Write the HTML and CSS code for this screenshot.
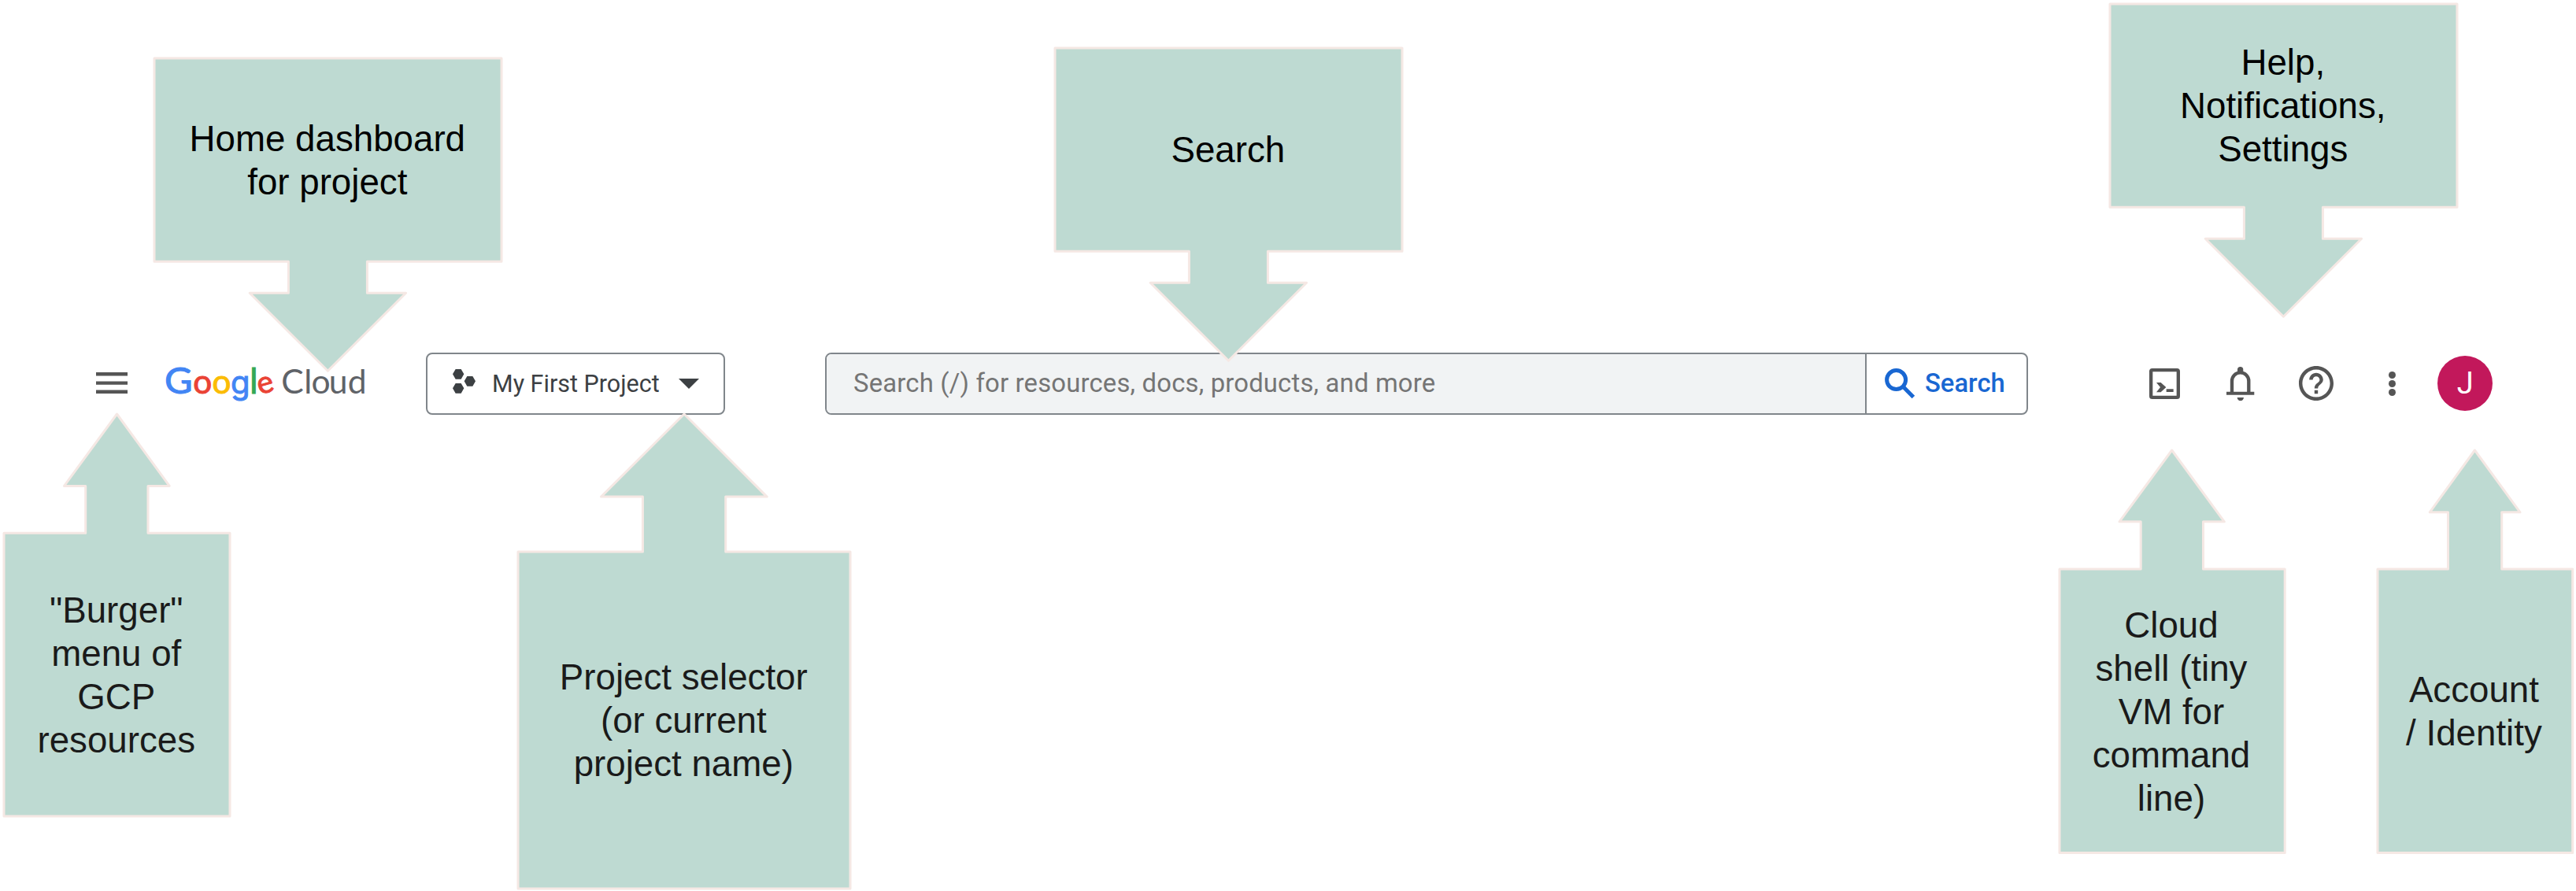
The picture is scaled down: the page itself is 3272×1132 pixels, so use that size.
FILE: index.html
```html
<!DOCTYPE html>
<html lang="en">
<head>
<meta charset="utf-8">
<title>Google Cloud console toolbar</title>
<link rel="stylesheet" href="styles.css">
</head>
<body>
<header class="toolbar">
  <svg class="menu" viewBox="0 0 40 28"><path d="M0 2.3h40M0 13.6h40M0 24.8h40"/></svg>

  <svg class="logo" viewBox="0 0 260 60">
    <g class="logo-google">
      <text class="blue big" x="-1" y="43" textLength="35.6" lengthAdjust="spacingAndGlyphs">G</text>
      <text class="red" x="35.3" y="42.7">o</text>
      <text class="yellow" x="59.6" y="42.7">o</text>
      <text class="blue round" x="83" y="42.7">g</text>
      <text class="green tall" x="107.3" y="42.5">l</text>
      <text class="red small" transform="translate(120.1 44.6) rotate(-16)">e</text>
    </g>
    <g class="logo-cloud">
      <text x="147.3" y="43">C</text>
      <text x="176.2" y="43">l</text>
      <text x="185.6" y="43">o</text>
      <text x="207.8" y="43">u</text>
      <text x="231.8" y="43">d</text>
    </g>
  </svg>

  <button class="project">
    <svg class="project-icon" viewBox="0 0 87 93"><path d="M11 0h21l11 19-11 19H11L0 19zM55 27h21l11 19-11 19H55L44 46zM11 54h21l11 19-11 19H11L0 73z"/></svg>
    <span class="project-name">My First Project</span>
    <svg class="caret" viewBox="0 0 26 13"><path d="M0 0h26L13 13z"/></svg>
  </button>

  <div class="search">
    <div class="search-field">Search (/) for resources, docs, products, and more</div>
    <button class="search-button">
      <svg class="search-icon" viewBox="0 0 39 39"><circle cx="14.6" cy="14.6" r="12"/><path d="M22.8 22.8 36.4 36.4"/></svg>
      <span>Search</span>
    </button>
  </div>

  <nav class="tools">
    <svg class="tool shell" viewBox="0 0 117 117"><rect x="6.5" y="6.5" width="104" height="104" rx="5"/><path d="M27 54h17l20 18-20 19H27l15-19zM65 79h27v11H65z"/></svg>
    <svg class="tool bell" viewBox="0 0 106 129"><path class="line" d="M21 98V54a32 32 0 0 1 64 0v44"/><path d="M0 95h106v12H0zM42 20V11a11 11 0 0 1 22 0v9zM41 117h25a12.5 12.5 0 0 1-25 0z"/></svg>
    <svg class="tool help" viewBox="2 2 20 20"><path d="M11 18h2v-2h-2v2zm1-16C6.48 2 2 6.48 2 12s4.48 10 10 10 10-4.48 10-10S17.52 2 12 2zm0 18c-4.41 0-8-3.59-8-8s3.59-8 8-8 8 3.59 8 8-3.59 8-8 8zm0-14c-2.21 0-4 1.79-4 4h2c0-1.1.9-2 2-2s2 .9 2 2c0 2-3 1.75-3 5h2c0-2.25 3-2.5 3-5 0-2.21-1.79-4-4-4z"/></svg>
    <svg class="tool more" viewBox="0 0 9 31"><circle cx="4.5" cy="4.5" r="4.5"/><circle cx="4.5" cy="15.5" r="4.5"/><circle cx="4.5" cy="26.5" r="4.5"/></svg>
    <span class="avatar">J</span>
  </nav>
</header>

<section class="callout down home">
  <svg class="shape"><path d="M0 0H441V258.3H270.4V298.3H319.6L220.4 397.2 121.2 298.3H170.4V258.3H0z"/></svg>
  <p class="label">Home dashboard<br>for project</p>
</section>
<section class="callout down find">
  <svg class="shape"><path d="M0 0H441V258.3H270.4V298.3H319.6L220.4 397.2 121.2 298.3H170.4V258.3H0z"/></svg>
  <p class="label">Search</p>
</section>
<section class="callout down support">
  <svg class="shape"><path d="M0 0H441V258.3H270.4V298.3H319.6L220.4 397.2 121.2 298.3H170.4V258.3H0z"/></svg>
  <p class="label">Help,<br>Notifications,<br>Settings</p>
</section>
<section class="callout up burger">
  <svg class="shape"><path d="M143.5 0 210.2 91.4H183V151.3H287V511.1H0V151.3H103.7V91.4H76.5z"/></svg>
  <p class="label">"Burger"<br>menu of<br>GCP<br>resources</p>
</section>
<section class="callout up selector">
  <svg class="shape"><path d="M211 0 316.2 105.1H263.7V174.9H422V602.9H0V174.9H158.4V105.1H105.5z"/></svg>
  <p class="label">Project selector<br>(or current<br>project name)</p>
</section>
<section class="callout up terminal">
  <svg class="shape"><path d="M142.7 0 209.3 90.8H182.5V151.1H286.2V511.6H0V151.1H103.2V90.8H76z"/></svg>
  <p class="label">Cloud<br>shell (tiny<br>VM for<br>command<br>line)</p>
</section>
<section class="callout up account">
  <svg class="shape"><path d="M123.4 0 181 78.8H157.7V151.1H247.7V511.6H0V151.1H89.5V78.8H66.2z"/></svg>
  <p class="label">Account<br>/ Identity</p>
</section>
</body>
</html>
```
FILE: styles.css
```css
* { box-sizing: border-box; }

body {
  margin: 0;
  padding-top: 448px;
  height: 1132px;
  position: relative;
  overflow: hidden;
  background: #fff;
  font-family: Roboto, "Liberation Sans", sans-serif;
}

svg { display: block; flex: none; overflow: visible; }

button {
  margin: 0;
  padding: 0;
  border: 0;
  background: none;
  font: inherit;
  text-align: left;
}

/* Toolbar */
.toolbar {
  display: flex;
  align-items: center;
  height: 78.6px;
  padding-left: 122px;
  color: #3c4043;
}

.menu { width: 40px; height: 28px; stroke: #555; stroke-width: 4.4; fill: none; }

.logo { width: 260px; height: 60px; margin-left: 48px; font-family: Lato, sans-serif; }
.logo-google { font-size: 42.3px; stroke-width: 1; }
.logo-cloud { font-size: 42.6px; fill: #5f6368; }
.big { font-size: 46px; }
.round { font-family: Inter, sans-serif; font-size: 40px; }
.tall { font-size: 43.5px; }
.small { font-size: 39px; }
.blue { fill: #4285f4; stroke: #4285f4; }
.red { fill: #ea4335; stroke: #ea4335; }
.yellow { fill: #fbbc04; stroke: #fbbc04; }
.green { fill: #34a853; stroke: #34a853; }

.project {
  display: flex;
  align-items: center;
  width: 380px;
  height: 100%;
  margin-left: 70.5px;
  padding-left: 32px;
  border: 2px solid #80868b;
  border-radius: 8px;
  color: #3c4043;
}
.project-icon { width: 29px; height: 31px; margin-top: -5px; fill: #3c4043; }
.project-name { width: 215px; margin-left: 21.5px; font-size: 30.5px; white-space: nowrap; }
.caret { width: 26px; height: 13px; margin-left: 21.5px; fill: #3c4043; }

.search {
  display: flex;
  width: 1528px;
  height: 100%;
  margin-left: 127.5px;
  border: 2px solid #80868b;
  border-radius: 8px;
  overflow: hidden;
}
.search-field {
  display: flex;
  align-items: center;
  width: 1321px;
  padding-left: 34px;
  border-right: 2px solid #80868b;
  background: #f1f3f4;
  color: #757575;
  font-size: 32.8px;
  letter-spacing: .2px;
}
.search-button {
  display: flex;
  align-items: center;
  flex: 1;
  gap: 12px;
  padding-left: 23px;
  color: #1967d2;
  font-size: 32.8px;
  font-weight: 500;
}
.search-icon { width: 39px; height: 39px; fill: none; stroke: #1967d2; stroke-width: 5; }

.tools { display: flex; align-items: center; margin-left: 154.3px; }
.tool { fill: #555; }
.shell { width: 39px; height: 39px; }
.shell rect { fill: none; stroke: #555; stroke-width: 13; }
.bell { width: 35.3px; height: 43px; margin-left: 59px; }
.bell .line { fill: none; stroke: #555; stroke-width: 13; }
.help { width: 44px; height: 44px; margin-left: 56.7px; }
.more { width: 9px; height: 31px; margin-left: 70px; }
.avatar {
  display: flex;
  align-items: center;
  justify-content: center;
  width: 70px;
  height: 70px;
  margin-left: 53px;
  border-radius: 50%;
  background: #c2185b;
  color: #fff;
  font-size: 38px;
}

/* Annotation arrows laid over the toolbar */
.callout { position: absolute; }
.shape {
  position: absolute;
  inset: 0;
  width: 100%;
  height: 100%;
  fill: #bedad2;
  stroke: #f5e8e4;
  stroke-width: 3;
  stroke-linejoin: round;
}
.label {
  position: relative;
  display: grid;
  place-content: center;
  margin: 0;
  padding: 1px 2px 0 0;
  font: 45.7px/55px "Liberation Sans", Arial, sans-serif;
  text-align: center;
  white-space: nowrap;
}
.down { width: 441px; height: 397.2px; color: #000; }
.down .label { height: 258.3px; }
.up { display: flex; flex-direction: column; justify-content: flex-end; color: #1a1a1a; }
.up .label { height: 360px; }

.home { left: 196.3px; top: 74.3px; }
.find { left: 1340.3px; top: 61.3px; }
.support { left: 2680.3px; top: 5.3px; }
.burger { left: 5.3px; top: 526.4px; width: 287px; height: 511.1px; }
.selector { left: 658.3px; top: 526.2px; width: 422px; height: 602.9px; }
.selector .label { height: 428px; }
.terminal { left: 2615.9px; top: 572.2px; width: 286.2px; height: 511.6px; }
.account { left: 3019.6px; top: 572.2px; width: 247.7px; height: 511.6px; }
```
